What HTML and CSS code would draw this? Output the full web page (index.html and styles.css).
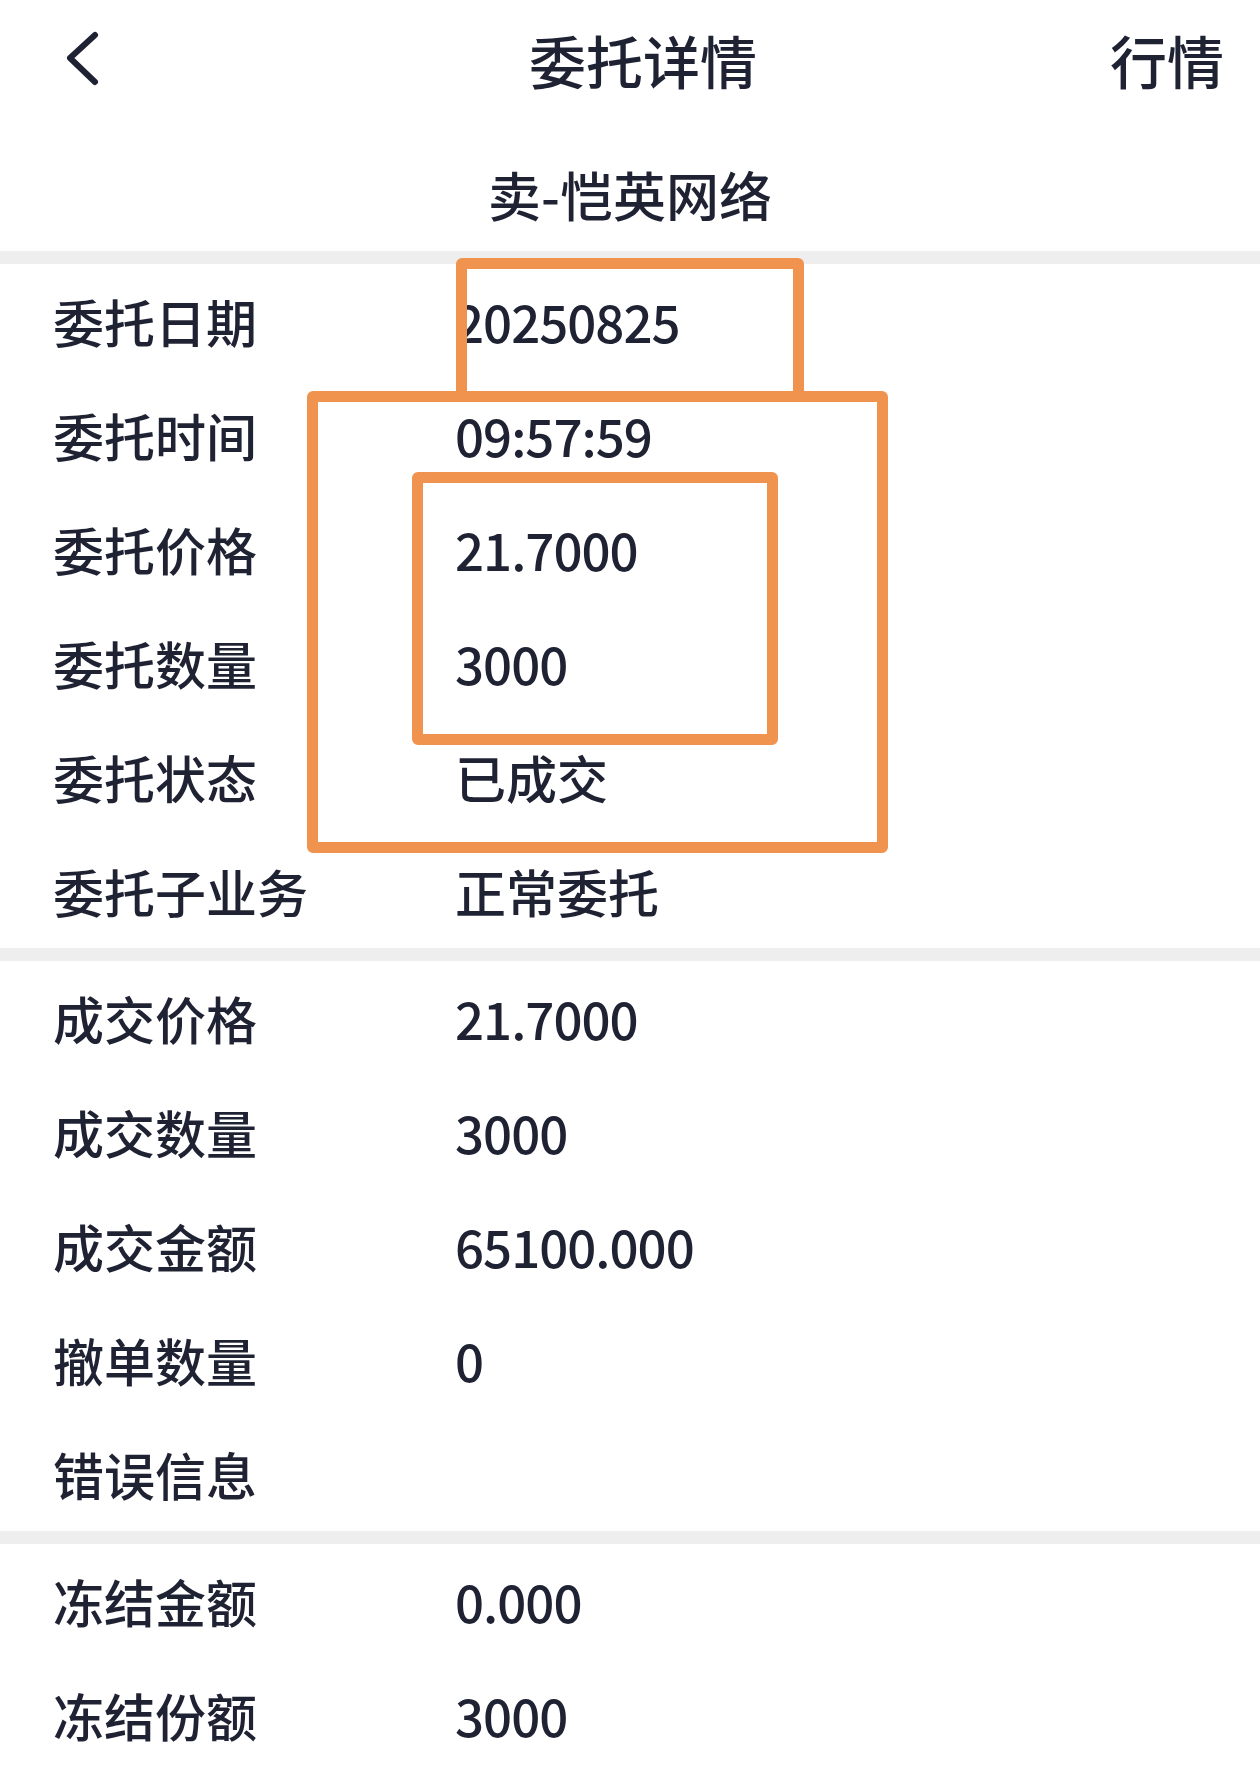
FILE: index.html
```html
<!DOCTYPE html>
<html>
<head>
	<meta charset="utf-8">
	<title>委托详情</title>
	<link rel="stylesheet" href="styles.css">
</head>
<body>
	<div class="navbar">
		<div class="back">
			<svg width="40" height="60" viewBox="0 0 40 60">
				<polyline points="35,6 10,29 35,53" fill="none" stroke="#1f2232" stroke-width="6" stroke-linecap="round" stroke-linejoin="round"/>
			</svg>
		</div>
		<div class="title">委托详情</div>
		<div class="action">行情</div>
	</div>

	<div class="subtitle">卖-恺英网络</div>

	<div class="section boxed">
		<div class="row"><span class="label">委托日期</span><span class="val num">20250825</span></div>
		<div class="row"><span class="label">委托时间</span><span class="val num">09:57:59</span></div>
		<div class="row"><span class="label">委托价格</span><span class="val num">21.7000</span></div>
		<div class="row"><span class="label">委托数量</span><span class="val num">3000</span></div>
		<div class="row"><span class="label">委托状态</span><span class="val">已成交</span></div>
		<div class="row"><span class="label">委托子业务</span><span class="val">正常委托</span></div>

		<!-- highlight boxes drawn over the rows -->
		<div class="mark mark-date"></div>
		<div class="mark mark-outer"></div>
		<div class="mark mark-inner"></div>
	</div>

	<div class="section">
		<div class="row"><span class="label">成交价格</span><span class="val num">21.7000</span></div>
		<div class="row"><span class="label">成交数量</span><span class="val num">3000</span></div>
		<div class="row"><span class="label">成交金额</span><span class="val num">65100.000</span></div>
		<div class="row"><span class="label">撤单数量</span><span class="val num">0</span></div>
		<div class="row"><span class="label">错误信息</span><span class="val"></span></div>
	</div>

	<div class="section">
		<div class="row"><span class="label">冻结金额</span><span class="val num">0.000</span></div>
		<div class="row"><span class="label">冻结份额</span><span class="val num">3000</span></div>
	</div>
</body>
</html>
```

FILE: styles.css
```css
html, body {
	margin: 0;
	padding: 0;
	height: 100%;
	overflow: hidden;
}

body {
	background-color: #ffffff;
	color: #1f2232;
	font-family: "Noto Sans CJK SC", "Noto Sans", sans-serif;
}

.navbar {
	display: flex;
	align-items: center;
	height: 118px;
	padding: 0 36px 0 60px;
}

.back {
	width: 116px;
	height: 60px;
}

.back svg {
	display: block;
}

.title {
	flex: 1;
	text-align: center;
	font-size: 57px;
	font-weight: 500;
	line-height: 118px;
}

.action {
	font-size: 57px;
	font-weight: 500;
	line-height: 118px;
}

.subtitle {
	text-align: center;
	font-size: 53px;
	font-weight: 500;
	line-height: 100px;
	padding: 26px 0 7px;
	border-bottom: 13px solid #eeeeee;
}

.section {
	border-bottom: 13px solid #eeeeee;
}

.boxed {
	position: relative;
}

.row {
	display: grid;
	grid-template-columns: 402px 1fr;
	padding-left: 53px;
	height: 114px;
	line-height: 114px;
	font-size: 51px;
	font-weight: 500;
}

.num {
	letter-spacing: -1px;
}

.mark {
	position: absolute;
	box-sizing: border-box;
	border: 11px solid #ef934e;
	border-radius: 6px;
}

.mark-date {
	top: -6px;
	left: 456px;
	width: 348px;
	height: 144px;
}

.mark-outer {
	top: 127px;
	left: 307px;
	width: 581px;
	height: 462px;
}

.mark-inner {
	top: 208px;
	left: 412px;
	width: 366px;
	height: 273px;
}
```
